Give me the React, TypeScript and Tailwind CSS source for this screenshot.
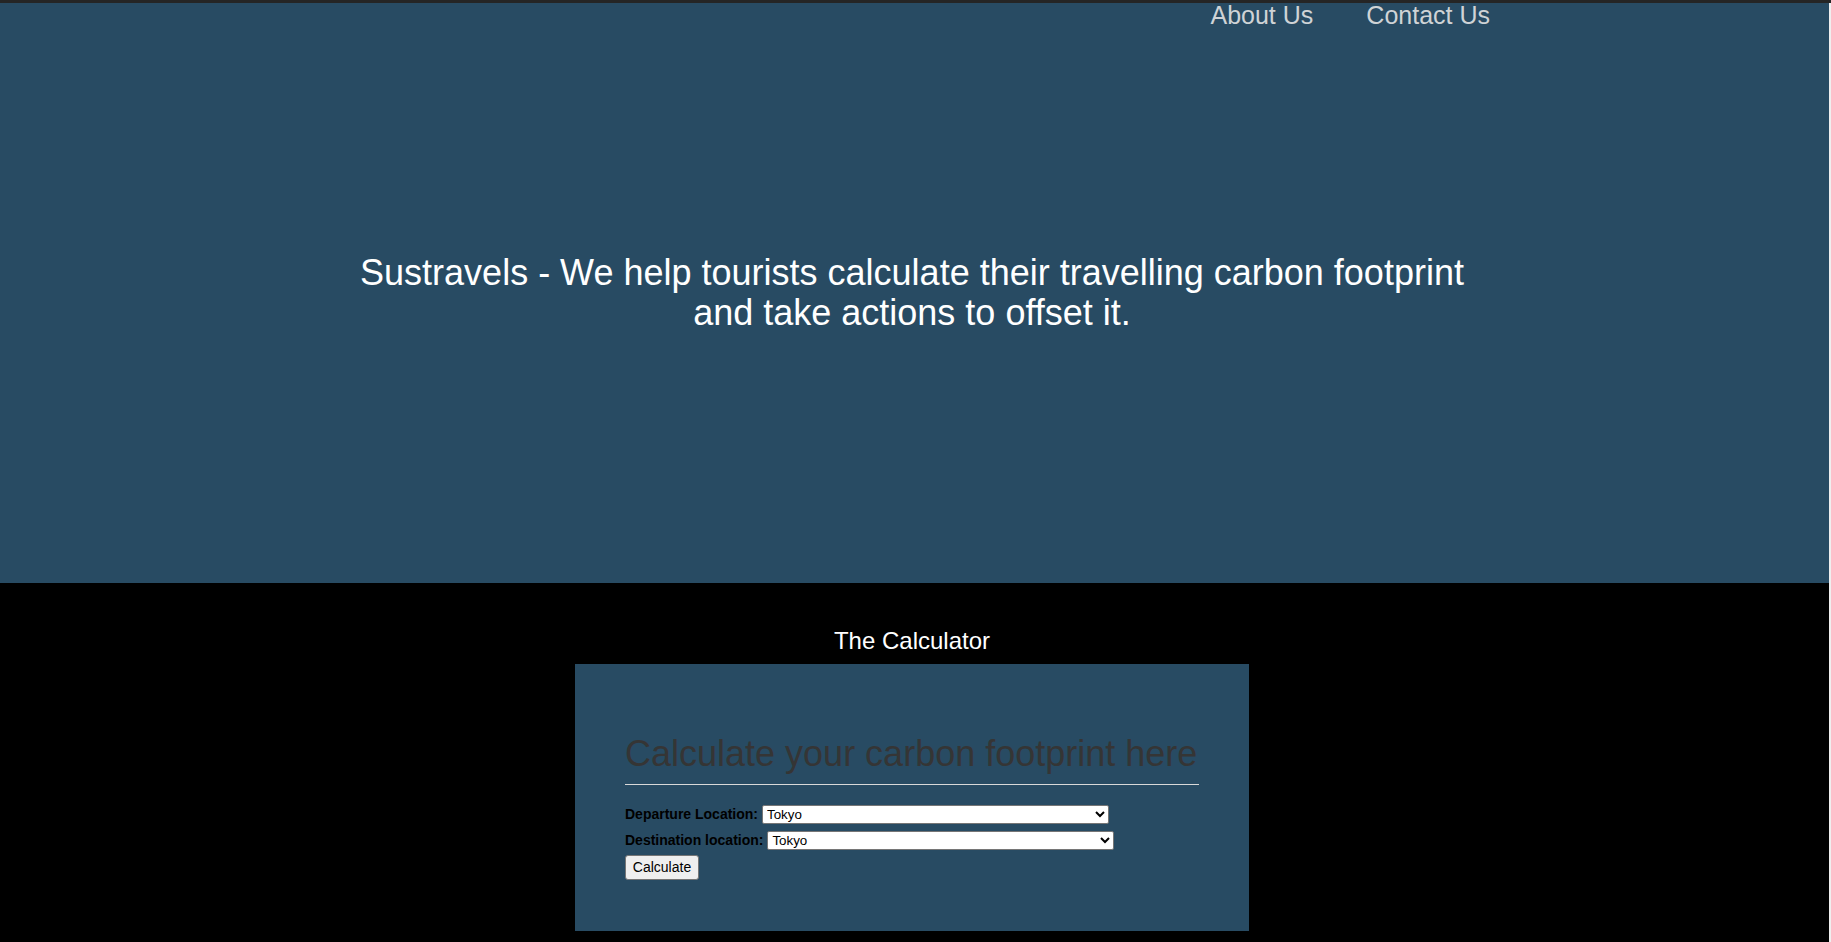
import React from "react";

export default function App() {
  return (
    <div
      className="min-h-screen flex flex-col bg-black"
      style={{ fontFamily: '"Liberation Sans", Arial, sans-serif' }}
    >
      <div className="h-[3px] bg-[#252525]" />
      <div className="flex flex-1">
        <main className="flex-1 flex flex-col">
          <header className="h-[580px] bg-[#284b63] flex flex-col">
            <nav className="flex justify-end gap-[53px] pr-[339px] text-[25px] leading-[25px] text-[#cfd3d6]">
              <a href="#about">About Us</a>
              <a href="#contact">Contact Us</a>
            </nav>
            <div className="flex-1 flex items-center justify-center pb-[25px] pr-[5px]">
              <h1 className="max-w-[1130px] text-center text-[36px] leading-[40px] font-normal text-white">
                Sustravels - We help tourists calculate their travelling carbon footprint and take actions to offset it.
              </h1>
            </div>
          </header>
          <section className="flex flex-col items-center pr-[5px] pt-[44px]">
            <h2 className="text-[24px] leading-[28px] text-white">The Calculator</h2>
            <div className="mt-[9px] w-[674px] bg-[#284b63] px-[50px] pt-[69px] pb-[51px]">
              <h3 className="whitespace-nowrap text-[36px] leading-[41px] text-[#353535]">
                Calculate your carbon footprint here
              </h3>
              <div className="mt-[10px] h-px bg-[#d9d9d9]" />
              <div className="mt-[20px] flex items-center gap-[4px] h-[19px]">
                <label className="text-[14px] font-bold text-black whitespace-nowrap">Departure Location:</label>
                <select className="w-[347px] h-[19px] bg-white border border-[#767676] rounded-[2px] text-[13.33px] text-black">
                  <option>Tokyo</option>
                  <option>London</option>
                  <option>New York</option>
                </select>
              </div>
              <div className="mt-[7px] flex items-center gap-[4px] h-[19px]">
                <label className="text-[14px] font-bold text-black whitespace-nowrap">Destination location:</label>
                <select className="w-[347px] h-[19px] bg-white border border-[#767676] rounded-[2px] text-[13.33px] text-black">
                  <option>Tokyo</option>
                  <option>London</option>
                  <option>New York</option>
                </select>
              </div>
              <button className="mt-[5px] block w-[74px] h-[25px] bg-[#efefef] border border-[#767676] rounded-[3px] text-[14px] text-black">
                Calculate
              </button>
            </div>
          </section>
        </main>
        <div className="w-[2px] bg-[#efefef]" />
      </div>
    </div>
  );
}
